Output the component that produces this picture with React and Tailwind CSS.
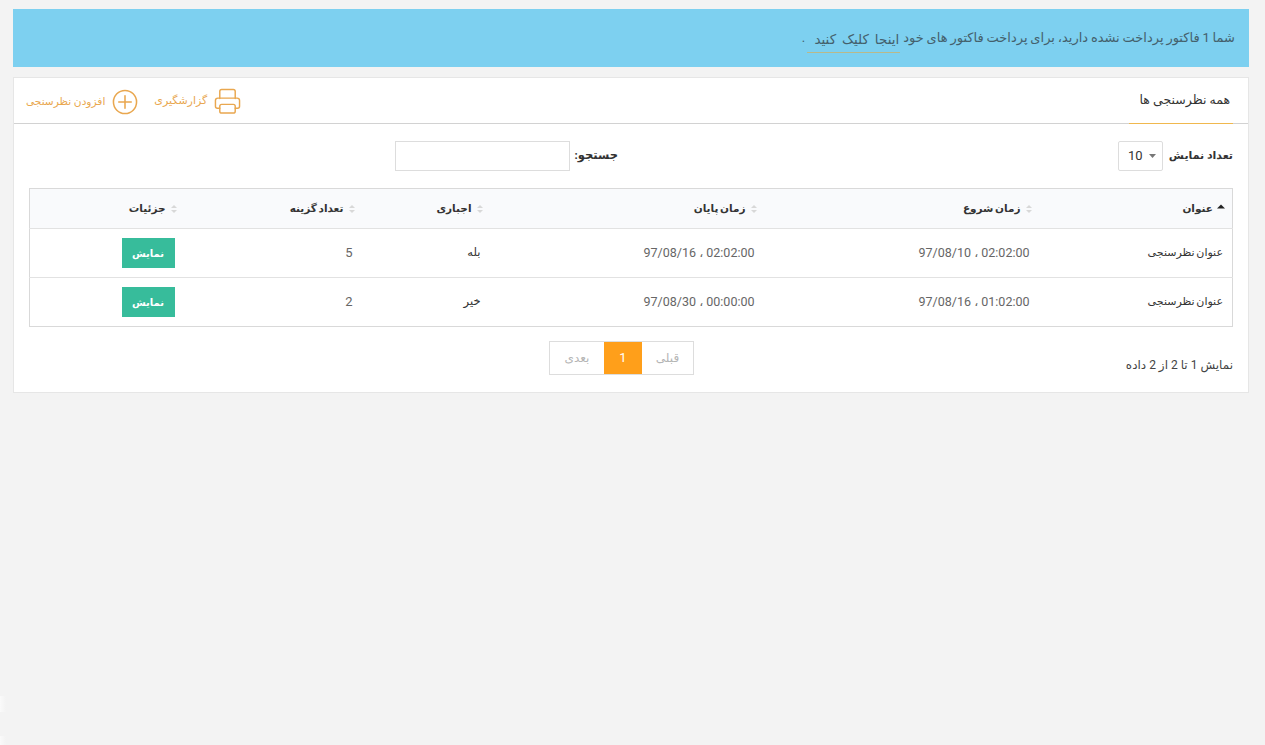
import React from "react";

function Sort({ active }) {
  return (
    <svg width="8" height="10" viewBox="0 0 8 10" className="shrink-0">
      {active ? (
        <path d="M0 4.5 L4 0.5 L8 4.5 Z" fill="#222" />
      ) : (
        <>
          <path d="M1 4 L4 1 L7 4 Z" fill="#d8d8d8" />
          <path d="M1 6 L4 9 L7 6 Z" fill="#d8d8d8" />
        </>
      )}
    </svg>
  );
}

function Printer() {
  return (
    <svg width="27" height="27" viewBox="0 0 28 28" fill="none" stroke="#e9a74f" strokeWidth="1.5" strokeLinejoin="round" strokeLinecap="round">
      <path d="M6 11 V3.5 a2 2 0 0 1 2 -2 H20 a2 2 0 0 1 2 2 V11" />
      <path d="M6 21 H3.5 a2 2 0 0 1 -2 -2 V13 a2.5 2.5 0 0 1 2.5 -2.5 H24 a2.5 2.5 0 0 1 2.5 2.5 V19 a2 2 0 0 1 -2 2 H22" />
      <rect x="6" y="17" width="16" height="9" rx="2" />
    </svg>
  );
}

function PlusCircle() {
  return (
    <svg width="26" height="26" viewBox="0 0 27 27" fill="none" stroke="#e9a74f" strokeWidth="1.6" strokeLinecap="round">
      <circle cx="13.5" cy="13.5" r="12" />
      <path d="M13.5 7 V20 M7 13.5 H20" />
    </svg>
  );
}

const heads = [
  { t: "عنوان", w: "w-[193px]", active: true },
  { t: "زمان شروع", w: "w-[275px]" },
  { t: "زمان پایان", w: "w-[274px]" },
  { t: "اجباری", w: "w-[128px]" },
  { t: "تعداد گزینه", w: "w-[178px]" },
  { t: "جزئیات", w: "" },
];

const rows = [
  ["عنوان نظرسنجی", "02:02:00 ، 97/08/10", "02:02:00 ، 97/08/16", "بله", "5"],
  ["عنوان نظرسنجی", "01:02:00 ، 97/08/16", "00:00:00 ، 97/08/30", "خیر", "2"],
];

export default function App() {
  return (
    <div dir="rtl" className="relative min-h-[745px] bg-[#f3f3f3] pt-[9px] pl-[13px] pr-[16px] text-[12px] text-[#333] font-['Roboto','DejaVu_Sans',sans-serif]">
      <div className="flex h-[58px] items-center bg-[#7dd0f0] pr-[14px] text-[13px] text-[#44606c]">
        <span className="[word-spacing:-0.4px]">شما 1 فاکتور پرداخت نشده دارید، برای پرداخت فاکتور های خود</span>
        <a className="mr-[3px] mt-[15px] h-[29px] w-[93px] self-start whitespace-nowrap border-b border-[#b9b98a] pr-[1px] pt-[5px] text-[13.5px] [word-spacing:2.5px]">اینجا کلیک کنید</a>
        <span className="mr-[2px]">.</span>
      </div>

      <div className="mt-[10px] h-[316px] border border-[#e6e6e6] bg-white">
        <div className="flex h-[46px] items-stretch justify-between border-b border-[#d2d2d2] pl-[12px] pr-[15px]">
          <div className="relative z-10 -mb-px flex w-[104px] items-center whitespace-nowrap border-b border-[#f0b84e] pr-[3px] text-[12.5px] text-[#333]">
            همه نظرسنجی ها
          </div>
          <div className="flex items-center pt-[2px] text-[11px] text-[#e9a74f]">
            <div className="flex items-center gap-[7px]"><Printer /><span>گزارشگیری</span></div>
            <div className="mr-[16px] flex items-center gap-[7px]"><PlusCircle /><span className="text-[10.6px]">افزودن نظرسنجی</span></div>
          </div>
        </div>

        <div className="px-[15px]">
          <div className="flex h-[64px] items-start pt-[17px]">
            <div className="flex w-[115px] shrink-0 items-center gap-[7px]">
              <span className="w-[63px] shrink-0 whitespace-nowrap text-[11px] font-bold text-[#333]">تعداد نمایش</span>
              <div dir="ltr" className="flex h-[30px] w-[45px] shrink-0 items-center justify-between rounded-[2px] border border-[#ddd] pl-[9px] pr-[6px] text-[13px] text-[#333]">
                <span>10</span>
                <svg width="7" height="4" viewBox="0 0 7 4"><path d="M0 0 H7 L3.5 4 Z" fill="#777" /></svg>
              </div>
            </div>
            <div className="mr-[500px] flex items-center gap-[6px]">
              <span className="w-[42px] shrink-0 whitespace-nowrap text-[11.5px] font-bold text-[#333]">جستجو:</span>
              <input className="h-[30px] w-[175px] border border-[#ddd] bg-white" />
            </div>
          </div>

          <table className="w-full table-fixed border-collapse border border-[#d9d9d9]">
            <thead>
              <tr className="h-[40px] bg-[#f9fafc]">
                {heads.map((h) => (
                  <th key={h.t} className={`${h.w} pr-[7px] text-right text-[10.5px] font-bold text-[#333] [word-spacing:-1px]`}>
                    <div className="flex items-center gap-[4px]">
                      <Sort active={h.active} />
                      <span>{h.t}</span>
                    </div>
                  </th>
                ))}
              </tr>
            </thead>
            <tbody>
              {rows.map((r, i) => (
                <tr key={i} className="h-[49px] border-t border-[#e2e2e2]">
                  <td className="pr-[9px] text-[11px] text-[#333] [word-spacing:-1px]">{r[0]}</td>
                  <td className="pr-[10px] text-[12.5px] text-[#666]">{r[1]}</td>
                  <td className="pr-[10px] text-[12.5px] text-[#666]">{r[2]}</td>
                  <td className="pr-[10px] text-[11.5px] text-[#333]">{r[3]}</td>
                  <td className="pr-[10px] text-[13px] text-[#666]">{r[4]}</td>
                  <td className="pr-[10px]">
                    <button className="flex h-[30px] w-[53px] items-center justify-center bg-[#37bc9b] text-[10px] font-bold text-white">نمایش</button>
                  </td>
                </tr>
              ))}
            </tbody>
          </table>

          <div className="flex items-start pt-[14px]">
            <div className="w-[539px] whitespace-nowrap pt-[15px] text-[12px] text-[#444]">نمایش 1 تا 2 از 2 داده</div>
            <div className="flex h-[34px] border border-[#ddd] text-[12px] text-[#b5b5b5]">
              <div className="flex w-[51px] items-center justify-center">قبلی</div>
              <div className="flex w-[38px] items-center justify-center bg-[#ff9f1a] text-[13px] text-white">1</div>
              <div className="flex w-[54px] items-center justify-center">بعدی</div>
            </div>
          </div>
        </div>
      </div>
      <div className="absolute left-0 top-[696px] h-[16px] w-[6px] bg-gradient-to-r from-white/60 to-transparent" />
      <div className="absolute left-0 top-[736px] h-[9px] w-[6px] bg-gradient-to-r from-white/60 to-transparent" />
    </div>
  );
}
